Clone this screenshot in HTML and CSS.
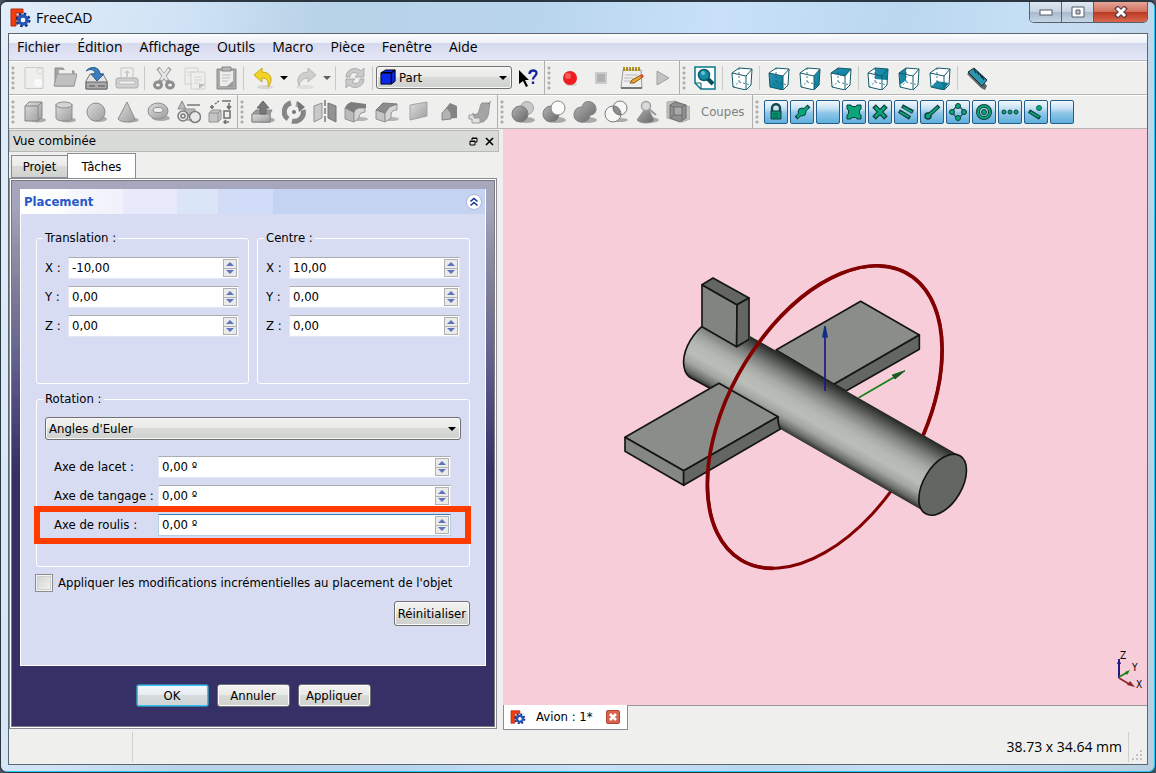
FILE: index.html
```html
<!DOCTYPE html>
<html lang="fr">
<head>
<meta charset="utf-8">
<title>FreeCAD</title>
<link rel="stylesheet" href="styles.css">
</head>
<body>
<svg class="defs" width="0" height="0" aria-hidden="true">
  <defs>
    <linearGradient id="metal" x1="0" y1="0" x2="1" y2="1"><stop offset="0" stop-color="#dcdddc"/><stop offset="1" stop-color="#9c9d9c"/></linearGradient>
    <linearGradient id="steel" x1="0" y1="0" x2="1" y2="1"><stop offset="0" stop-color="#b4b5b4"/><stop offset="1" stop-color="#646564"/></linearGradient>
    <linearGradient id="teal" x1="0" y1="0" x2="1" y2="1"><stop offset="0" stop-color="#2f8fb4"/><stop offset="1" stop-color="#00819a"/></linearGradient>
    <symbol id="logo" viewBox="0 0 21 19">
      <path d="M1 1h12v4H6v3h5v4H6v6H1z" fill="#f43c0c" stroke="#b42a10"/>
      <g fill="none" stroke="#14307c"><circle cx="13" cy="12" r="6" stroke-width="3" stroke-dasharray="2.4 2.3"/><circle cx="13" cy="12" r="4" stroke="#2458b4" stroke-width="3.4"/></g>
      <circle cx="13" cy="12" r="2.2" fill="#f4f8ff"/>
    </symbol>
    <symbol id="new" viewBox="0 0 24 24"><path d="M3 1.500h18v21H3z" fill="#efefee" stroke="#cacbca"/><circle cx="18" cy="5" r="3" fill="none" stroke="#dadada"/><circle cx="16" cy="17" r="4" fill="#fafafa"/></symbol>
    <symbol id="open" viewBox="0 0 24 24"><path d="M2 20V2h8l2 3h9v15z" fill="#a3a4a3" stroke="#8e8f8e"/><path d="M6 4h13v5H6z" fill="#eee"/><path d="M1 20 4 8h20l-3 12z" fill="#bfc0bf" stroke="#979897"/></symbol>
    <symbol id="save" viewBox="0 0 24 24"><path d="m2 15 4-7h13l4 7v8H2z" fill="#e1e2e1" stroke="#777"/><path d="M2 16h21v7H2z" fill="#aaabaa" stroke="#666"/><path d="M5 20h6m3 0h7" stroke="#555"/><path d="M2 5c5-6 14-4 14 3h4l-7 7-6-7h4C11 4 7 2 2 5z" fill="#3f7ebc" stroke="#285c94"/></symbol>
    <symbol id="print" viewBox="0 0 24 24"><path d="M6 2h12v12H6z" fill="#efefee" stroke="#c5c6c5"/><path d="M11 11V7H9l3-3 3 3h-2v4" fill="#c8c9c8"/><rect x="1" y="12" width="22" height="10" rx="2" fill="#d0d1d0" stroke="#aaa"/><path d="M4 15h16v3H4z" fill="#f4f4f4" stroke="#bbb"/></symbol>
    <symbol id="cut" viewBox="0 0 24 24"><path d="m6 2 11 15M18 2 7 17" stroke="#9a9b9a" stroke-width="4"/><path d="m7 3 8 11M17 3 9 14" stroke="#e8e9e8" stroke-width="2.400"/><g fill="none" stroke="#8d8e8d" stroke-width="3"><ellipse cx="6" cy="19" rx="3.500" ry="3"/><ellipse cx="18" cy="19" rx="3.500" ry="3"/></g></symbol>
    <symbol id="copy" viewBox="0 0 24 24"><g fill="#efefee" stroke="#cfd0cf"><path d="M2 2h13v16H2z"/><path d="M8 6h14v17H8z"/></g><path d="M4 6h9M4 9h4m3 2h8m-8 3h8m-8 3h6" stroke="#d2d3d2"/><path d="M16 23v-5h6z" fill="#bbb"/></symbol>
    <symbol id="paste" viewBox="0 0 24 24"><path d="M3 3h19v20H3z" fill="#aaa" stroke="#888"/><path d="M6 5h13v15H6z" fill="#ececeb"/><path d="M8 1h9v4H8z" fill="#b8b9b8" stroke="#858685"/><path d="M8 9h9M8 12h8m-8 3h6" stroke="#bfbfbf"/><path d="M19 15v6h-7z" fill="#999"/></symbol>
    <symbol id="undo" viewBox="0 0 24 24"><ellipse cx="14" cy="21" rx="8" ry="2" fill="#d6d6d3"/><path d="m3 9 8-7v4c9 0 12 8 6 15 1-6-1-9-6-9v4z" fill="#f2d326" stroke="#c9a91c"/></symbol>
    <symbol id="redo" viewBox="0 0 24 24"><ellipse cx="11" cy="21" rx="9" ry="2" fill="#dedfdd"/><path d="m22 9-8-7v4C5 6 2 13 5 20c1-5 4-8 9-8v4z" fill="#ced0ce" stroke="#b6b7b6"/></symbol>
    <symbol id="refresh" viewBox="0 0 24 24"><g fill="#c9cac9" stroke="#a9aaa9"><path d="M3 11C3 3 13 0 18 5l3-3v9h-9l3-3c-4-3-8-1-8 3z"/><path d="M21 13c0 8-10 11-15 6l-3 3v-9h9l-3 3c4 3 8 1 8-3z"/></g></symbol>
    <symbol id="bluecube" viewBox="0 0 18 18"><path d="m1 4 5-3h10v12l-4 3H1z" fill="#0a28ec" stroke="#000"/><path d="M1 4h11v12M12 4l4-3" fill="none" stroke="#000" stroke-width="1.500"/></symbol>
    <symbol id="whatsthis" viewBox="0 0 24 24"><path d="M3 4v14l4-3 3 6 2-1-3-6h4z" fill="#000"/><path d="M13.500 8c0-4.500 7-4.500 7-1s-3.500 3-3.500 6.500m0 2v2.500" fill="none" stroke="#1424a0" stroke-width="2.300"/></symbol>
    <symbol id="record" viewBox="0 0 24 24"><ellipse cx="13" cy="18" rx="6" ry="2" fill="#d0d0cd"/><circle cx="12" cy="12" r="7" fill="#ee1c1c"/><circle cx="10" cy="10" r="3" fill="#f65c5c"/></symbol>
    <symbol id="stop" viewBox="0 0 24 24"><path d="M7 7h10v10H7z" fill="#b0b1b0" stroke="#ccc" stroke-width="2"/></symbol>
    <symbol id="macroedit" viewBox="0 0 24 24"><path d="M3 4h18l1 18H1z" fill="#edeeed" stroke="#999"/><path d="M1 22h21" stroke="#777" stroke-width="2"/><path d="M3 3h18" stroke="#ac9020" stroke-width="4" stroke-dasharray="2 1"/><path d="M5 9h13M4 12h9m-9 3h7" stroke="#b7b8b7"/><path d="m10 17 2-3 9-5 2 2-9 6z" fill="#eea32c" stroke="#86591a"/><path d="m20 10 2-2 2 2-2 2z" fill="#d84432"/></symbol>
    <symbol id="play" viewBox="0 0 24 24"><path d="m6 5 12 7-12 7z" fill="#c1c2c1" stroke="#a0a1a0"/></symbol>
    <symbol id="fit" viewBox="0 0 24 24"><path d="M2 1h20v22H8l-6-6z" fill="#fff" stroke="#08788c" stroke-width="1.500"/><path d="M2 17h6v6" fill="none" stroke="#075c70"/><path d="m14 12 6 6" stroke="#07505e" stroke-width="4"/><circle cx="11" cy="9" r="5.500" fill="#168ba5" stroke="#075c70" stroke-width="1.500"/><circle cx="10" cy="7" r="2" fill="#70bdd0"/></symbol>
    <symbol id="wire" viewBox="0 0 24 24"><g fill="none" stroke="#135a69" stroke-linejoin="round"><path d="m2 7 7-5 13 1-6 7-14-3 1 14 13 3V10m0 14 5-5 1-16"/><path d="m3 21 6-5 12 3M9 16V2" stroke-width=".8" stroke-dasharray="2 2"/></g></symbol>
    <symbol id="v-iso" viewBox="0 0 24 24"><path d="m2 7 7-5 13 1-1 16-5 5-13-3z" fill="#fff"/><use href="#wire"/></symbol>
    <symbol id="v-front" viewBox="0 0 24 24"><path d="m2 7 7-5 13 1-1 16-5 5-13-3z" fill="#fff"/><path d="m2 7 14 3v14L3 21z" fill="url(#teal)"/><use href="#wire"/></symbol>
    <symbol id="v-right" viewBox="0 0 24 24"><path d="m2 7 7-5 13 1-1 16-5 5-13-3z" fill="#fff"/><path d="m16 10 6-7-1 16-5 5z" fill="url(#teal)"/><use href="#wire"/></symbol>
    <symbol id="v-top" viewBox="0 0 24 24"><path d="m2 7 7-5 13 1-1 16-5 5-13-3z" fill="#fff"/><path d="m2 7 7-5 13 1-6 7z" fill="url(#teal)"/><use href="#wire"/></symbol>
    <symbol id="v-rear" viewBox="0 0 24 24"><path d="m2 7 7-5 13 1-1 16-5 5-13-3z" fill="#fff"/><path d="m9 2 13 1-1 11-12-1z" fill="url(#teal)"/><use href="#wire"/></symbol>
    <symbol id="v-left" viewBox="0 0 24 24"><path d="m2 7 7-5 13 1-1 16-5 5-13-3z" fill="#fff"/><path d="m2 7 7-5v12l-6 5z" fill="url(#teal)"/><use href="#wire"/></symbol>
    <symbol id="v-bottom" viewBox="0 0 24 24"><path d="m2 7 7-5 13 1-1 16-5 5-13-3z" fill="#fff"/><path d="m3 21 6-6 12 2-5 7z" fill="url(#teal)"/><use href="#wire"/></symbol>
    <symbol id="ruler" viewBox="0 0 24 24"><path d="m2 8 14 14 4 2 2-4L8 3z" fill="#5d6462"/><path d="m3 6 6-4 13 12-5 6z" fill="#2f94b0" stroke="#12313a"/><path d="m9 3 2 4m1-2 2 4m1-1 2 4m0-2 2 4" stroke="#102b33" stroke-width="1.200"/></symbol>
    <symbol id="box" viewBox="0 0 24 24"><ellipse cx="16" cy="20" rx="8" ry="2.500" fill="#aaa"/><path d="m3 6 4-4h13v15l-4 4H3z" fill="url(#metal)" stroke="#858685"/><path d="M3 6h13v15m0-15 4-4" fill="none" stroke="#858685"/></symbol>
    <symbol id="cyl" viewBox="0 0 24 24"><ellipse cx="15" cy="20" rx="8" ry="2.500" fill="#aaa"/><path d="M3 4v14c0 4 16 4 16 0V4" fill="url(#metal)" stroke="#8d8e8d"/><ellipse cx="11" cy="5" rx="8" ry="3" fill="#d3d4d3" stroke="#8d8e8d"/></symbol>
    <symbol id="sphere" viewBox="0 0 24 24"><ellipse cx="15" cy="19" rx="8" ry="3" fill="#aaa"/><circle cx="12" cy="12" r="9" fill="url(#metal)" stroke="#8d8e8d"/></symbol>
    <symbol id="cone" viewBox="0 0 24 24"><ellipse cx="15" cy="20" rx="9" ry="2.500" fill="#aaa"/><path d="m12 2 8 17c-2 4-14 4-17 0z" fill="url(#metal)" stroke="#8d8e8d"/></symbol>
    <symbol id="torus" viewBox="0 0 24 24"><ellipse cx="15" cy="18" rx="9" ry="3" fill="#aaa"/><ellipse cx="12" cy="11" rx="10" ry="8" fill="url(#metal)" stroke="#8d8e8d"/><ellipse cx="12" cy="10" rx="5" ry="2.500" fill="#f0f0ef" stroke="#8d8e8d"/></symbol>
    <symbol id="prims" viewBox="0 0 24 24"><path d="m5 1 4 8H1z" fill="#bbb" stroke="#888"/><path d="M10 5h13" stroke="#777" stroke-width="1.500"/><path d="M7 9h11v6H7z" fill="#b7b8b7" stroke="#909190"/><g fill="#e8e9e8" stroke="#7d7e7d" stroke-width="1.500"><circle cx="6" cy="16" r="5"/><circle cx="6" cy="16" r="2"/><circle cx="18" cy="17" r="5.500"/></g><path d="M10 20h5" stroke="#777"/></symbol>
    <symbol id="shapes" viewBox="0 0 24 24"><path d="m1 13 3-3h9v9l-3 3H1z" fill="#c4c5c4" stroke="#929392"/><path d="M1 13h9v9m0-9 3-3" fill="none" stroke="#929392"/><g fill="none" stroke="#6f706f" stroke-width="1.500"><path d="M2 7h4M4 5v4M14 1h9m-2 2v5m-2-2 2 3 2-3M16 11h6v7h-6zM21 22h-5m2-2-2 2 2 2"/><path d="m7 4 4-3" stroke-dasharray="2 1"/></g></symbol>
    <symbol id="extrude" viewBox="0 0 24 24"><ellipse cx="15" cy="20" rx="9" ry="3" fill="#aaa"/><path d="m1 14 4-4h16l-2 4v8H1z" fill="#9a9b9a" stroke="#888"/><path d="M1 14h18v8H1z" fill="url(#metal)" stroke="#888"/><path d="M9 14V8H6l6-7 6 7h-3v6z" fill="#777877" stroke="#666"/></symbol>
    <symbol id="revolve" viewBox="0 0 24 24"><g fill="none" stroke="#848584" stroke-width="5"><path d="M9 3a9 9 0 0 0-3 16"/><path d="M10 21a9 9 0 0 0 11-11"/><path d="M14 4a9 9 0 0 1 5 3" stroke="#a6a7a6"/></g><path d="m15 1 8 6-6 5z" fill="#747574"/><circle cx="12" cy="12" r="2" fill="#777"/></symbol>
    <symbol id="mirror" viewBox="0 0 24 24"><path d="m1 6 8-3v15l-8 4z" fill="#c8c9c8" stroke="#929392"/><path d="m15 3 8 3v16l-8-4z" fill="#929392" stroke="#757675"/><path d="M12 0v24" stroke="#777" stroke-width="1.500" stroke-dasharray="6 2"/></symbol>
    <symbol id="fillet" viewBox="0 0 24 24"><ellipse cx="16" cy="19" rx="8" ry="2" fill="#b4b5b4"/><path d="M1 8v11l9 3V11z" fill="#b9bab9" stroke="#929392"/><path d="M10 22V12q1-3 5-4h6v4q-5 0-6 4v2z" fill="#d4d5d4" stroke="#929392"/><path d="M1 8q1-4 6-6l15 2v4h-6q-5 0-6 5z" fill="#7b7c7b"/></symbol>
    <symbol id="chamfer" viewBox="0 0 24 24"><ellipse cx="16" cy="19" rx="8" ry="2" fill="#b4b5b4"/><path d="M1 10v9l9 3V12z" fill="#c4c5c4" stroke="#929392"/><path d="M10 22V12l5-6 7-2v6q-6 0-6 5v3z" fill="#d4d5d4" stroke="#929392"/><path d="m1 10 7-7 14 1-8 3-4 6z" fill="#8b8c8b" stroke="#7b7c7b"/></symbol>
    <symbol id="face" viewBox="0 0 24 24"><path d="m4 5 17-3v14L4 20z" fill="url(#metal)" stroke="#a2a3a2"/></symbol>
    <symbol id="ruled" viewBox="0 0 24 24"><path d="m5 13 8-10 7 3v12L5 19z" fill="#838483"/><path d="m5 13 5-5 4 5v6l-9 1z" fill="#b2b3b2" stroke="#858685"/></symbol>
    <symbol id="loft" viewBox="0 0 24 24"><path d="m5 13 2 2c6-2 4-10 7-12h8c-2 8 0 15-7 19H5z" fill="#a3a4a3" stroke="#909190"/><path d="M1 15h5v3h6v5H4v-4H1z" fill="#e0e1e0" stroke="#999"/><path d="m20 4 3-3" stroke="#838483" fill="none"/></symbol>
    <symbol id="bool" viewBox="0 0 24 24"><ellipse cx="15" cy="20" rx="9" ry="3" fill="#aaa"/><circle cx="16" cy="8" r="6.500" fill="#c8c9c8" stroke="#a2a3a2"/><circle cx="9" cy="14" r="8" fill="url(#steel)" stroke="#7d7e7d"/></symbol>
    <symbol id="difference" viewBox="0 0 24 24"><ellipse cx="15" cy="20" rx="9" ry="3" fill="#aaa"/><circle cx="9" cy="14" r="8" fill="url(#steel)" stroke="#7d7e7d"/><circle cx="16" cy="8" r="7" fill="#fbfbfa" stroke="#858685"/></symbol>
    <symbol id="union" viewBox="0 0 24 24"><ellipse cx="15" cy="20" rx="9" ry="3" fill="#aaa"/><path d="M9 7c2-9 14-6 14 2 0 4-3 6-6 6-1 10-16 9-16 0 0-5 3-8 8-8z" fill="url(#steel)" stroke="#7d7e7d"/></symbol>
    <symbol id="common" viewBox="0 0 24 24"><ellipse cx="15" cy="20" rx="9" ry="2" fill="#aaa"/><g fill="#f7f7f6" stroke="#7d7e7d"><circle cx="9" cy="14" r="8"/><circle cx="16" cy="8" r="7"/></g><path d="M9.500 6c4 0 7 3 7.500 8.500-5 0-8-4-7.500-8.500z" fill="#8f908f" stroke="#6d6e6d"/></symbol>
    <symbol id="check" viewBox="0 0 24 24"><ellipse cx="15" cy="20" rx="9" ry="3" fill="#aaa"/><path d="m12 6 7 14c-2 4-14 4-17 0z" fill="url(#steel)" stroke="#909190"/><path d="m14 9 7 6" stroke="#999" stroke-width="2"/><circle cx="11" cy="6" r="4.500" fill="#d9dad9" stroke="#a0a1a0" stroke-width="1.500"/></symbol>
    <symbol id="section" viewBox="0 0 24 24"><path d="m1 2 8-1 15 6v12l-8 3-15-4z" fill="#c0c1c0" stroke="#aaa"/><path d="m4 5 5-3 11 3v13l-6 4-10-4z" fill="#8f908f" stroke="#6d6e6d"/><path d="M8 7h8v8H8zM4 18l4-3m8 0v6M4 5l4 2m8 0 4-2" fill="#a9aaa9" stroke="#6d6e6d"/></symbol>
    <symbol id="s-lock" viewBox="0 0 22 22"><path d="M7 11V7c0-5 8-5 8 0v4" fill="none" stroke="#164b49" stroke-width="2.400"/><path d="M6 10h10v8H6z" fill="#07906b" stroke="#103f3c"/><path d="M8 13h5m-5 3h5" stroke="#0b5e54"/></symbol>
    <symbol id="s-mid" viewBox="0 0 22 22"><path d="m5 17 13-12" stroke="#103f3c" stroke-width="4"/><circle cx="11" cy="11" r="4" fill="#08a678" stroke="#103f3c"/><path d="m6 16 11-10" stroke="#08a678" stroke-width="2.500"/></symbol>
    <symbol id="s-grid" viewBox="0 0 22 22"><path d="M4 4h4l1 1.500h4L14 4h4v4l-1.500 1v4l1.500 1v4h-4l-1-1.500H9L8 18H4v-4l1.500-1V9L4 8z" fill="#08a678" stroke="#103f3c"/></symbol>
    <symbol id="s-int" viewBox="0 0 22 22"><path d="m5 5 12 12M17 5 5 17" stroke="#103f3c" stroke-width="5"/><path d="m6 6 10 10M16 6 6 16" stroke="#08a678" stroke-width="2.500"/></symbol>
    <symbol id="s-par" viewBox="0 0 22 22"><g stroke="#103f3c" stroke-width="4"><path d="m7 5 11 6M4 10l11 7"/></g><g stroke="#08a678" stroke-width="2"><path d="m8 6 9 5M5 11l9 5"/></g></symbol>
    <symbol id="s-end" viewBox="0 0 22 22"><path d="M8 14 18 5" stroke="#103f3c" stroke-width="4"/><circle cx="7" cy="15" r="3" fill="#08a678" stroke="#103f3c" stroke-width="1.500"/><path d="m8 14 9-8" stroke="#08a678" stroke-width="2"/></symbol>
    <symbol id="s-ang" viewBox="0 0 22 22"><circle cx="11" cy="11" r="5" fill="none" stroke="#285b72" stroke-width="1.500"/><g fill="#08a678" stroke="#103f3c"><circle cx="11" cy="5" r="2.500"/><circle cx="17" cy="11" r="2.500"/><circle cx="11" cy="17" r="2.500"/><circle cx="5" cy="11" r="2.500"/></g></symbol>
    <symbol id="s-cen" viewBox="0 0 22 22"><circle cx="11" cy="11" r="6" fill="none" stroke="#103f3c" stroke-width="4"/><circle cx="11" cy="11" r="6" fill="none" stroke="#08a678" stroke-width="2"/><circle cx="11" cy="11" r="2.500" fill="#08a678" stroke="#103f3c"/></symbol>
    <symbol id="s-ext" viewBox="0 0 22 22"><g fill="#08a678" stroke="#103f3c"><circle cx="5" cy="11" r="2"/><circle cx="11" cy="11" r="2"/><circle cx="17" cy="11" r="2"/></g></symbol>
    <symbol id="s-near" viewBox="0 0 22 22"><path d="m4 10 11 7" stroke="#103f3c" stroke-width="4"/><path d="m5 11 9 5" stroke="#08a678" stroke-width="2"/><circle cx="14" cy="7" r="2.500" fill="#08a678" stroke="#0b6c58"/></symbol>
    <symbol id="arrow" viewBox="0 0 8 4"><path d="M0 0h8L4 4z"/></symbol>
  </defs>
</svg>

<div class="window">
  <header class="titlebar">
    <svg class="logo"><use href="#logo"/></svg>
    <h1 class="title">FreeCAD</h1>
    <div class="winbtns">
      <button class="winbtn" aria-label="Réduire"><svg width="14" height="8" viewBox="0 0 14 8"><rect x="1" y="2" width="12" height="5" fill="#fff" stroke="#525b68"/></svg></button>
      <button class="winbtn" aria-label="Agrandir"><svg width="14" height="12" viewBox="0 0 14 12"><path d="M1 1h12v10H1z" fill="#fff" stroke="#525b68"/><path d="M5 4h4v4H5z" fill="#b9c6d8" stroke="#525b68"/></svg></button>
      <button class="winbtn close" aria-label="Fermer"><svg width="14" height="12" viewBox="0 0 14 12"><path d="m2 1 10 10M12 1 2 11" stroke="#5d3c44" stroke-width="5"/><path d="m3 2 8 8m0-8-8 8" stroke="#fff" stroke-width="3"/></svg></button>
    </div>
  </header>

  <div class="frame">
    <nav class="menubar">
      <button>Fichier</button><button>Édition</button><button>Affichage</button><button>Outils</button><button>Macro</button><button>Pièce</button><button>Fenêtre</button><button>Aide</button>
    </nav>

    <div class="toolrow">
      <div class="toolbar">
        <i class="grip"></i>
        <button class="tool" aria-label="Nouveau"><svg><use href="#new"/></svg></button>
        <button class="tool" aria-label="Ouvrir"><svg><use href="#open"/></svg></button>
        <button class="tool" aria-label="Enregistrer"><svg><use href="#save"/></svg></button>
        <button class="tool" aria-label="Imprimer"><svg><use href="#print"/></svg></button>
        <i class="sep"></i>
        <button class="tool" aria-label="Couper"><svg><use href="#cut"/></svg></button>
        <button class="tool" aria-label="Copier"><svg><use href="#copy"/></svg></button>
        <button class="tool" aria-label="Coller"><svg><use href="#paste"/></svg></button>
        <i class="sep"></i>
        <button class="tool" aria-label="Annuler la commande"><svg><use href="#undo"/></svg></button>
        <button class="drop" aria-label="Liste annuler"><svg class="arrow"><use href="#arrow"/></svg></button>
        <button class="tool" aria-label="Rétablir"><svg><use href="#redo"/></svg></button>
        <button class="drop dim" aria-label="Liste rétablir"><svg class="arrow"><use href="#arrow"/></svg></button>
        <i class="sep"></i>
        <button class="tool" aria-label="Rafraîchir"><svg><use href="#refresh"/></svg></button>
        <i class="sep"></i>
        <div class="combo bench">
          <svg class="benchicon"><use href="#bluecube"/></svg>
          <select aria-label="Atelier"><option>Part</option></select>
          <svg class="arrow"><use href="#arrow"/></svg>
        </div>
        <button class="tool" aria-label="Qu'est-ce que c'est ?"><svg><use href="#whatsthis"/></svg></button>
      </div>
      <div class="toolbar">
        <i class="grip"></i>
        <button class="tool" aria-label="Enregistrer macro"><svg><use href="#record"/></svg></button>
        <button class="tool" aria-label="Arrêter"><svg><use href="#stop"/></svg></button>
        <button class="tool" aria-label="Macros"><svg><use href="#macroedit"/></svg></button>
        <button class="tool" aria-label="Exécuter"><svg><use href="#play"/></svg></button>
      </div>
      <div class="toolbar last">
        <i class="grip"></i>
        <button class="tool" aria-label="Tout afficher"><svg><use href="#fit"/></svg></button>
        <i class="sep"></i>
        <button class="tool" aria-label="Axonométrique"><svg><use href="#v-iso"/></svg></button>
        <i class="sep"></i>
        <button class="tool" aria-label="Face"><svg><use href="#v-front"/></svg></button>
        <button class="tool" aria-label="Droite"><svg><use href="#v-right"/></svg></button>
        <button class="tool" aria-label="Dessus"><svg><use href="#v-top"/></svg></button>
        <i class="sep"></i>
        <button class="tool" aria-label="Arrière"><svg><use href="#v-rear"/></svg></button>
        <button class="tool" aria-label="Gauche"><svg><use href="#v-left"/></svg></button>
        <button class="tool" aria-label="Dessous"><svg><use href="#v-bottom"/></svg></button>
        <i class="sep"></i>
        <button class="tool" aria-label="Mesurer"><svg><use href="#ruler"/></svg></button>
      </div>
    </div>

    <div class="toolrow part">
      <div class="toolbar">
        <i class="grip"></i>
        <button class="tool" aria-label="Cube"><svg><use href="#box"/></svg></button>
        <button class="tool" aria-label="Cylindre"><svg><use href="#cyl"/></svg></button>
        <button class="tool" aria-label="Sphère"><svg><use href="#sphere"/></svg></button>
        <button class="tool" aria-label="Cône"><svg><use href="#cone"/></svg></button>
        <button class="tool" aria-label="Tore"><svg><use href="#torus"/></svg></button>
        <button class="tool" aria-label="Primitives"><svg><use href="#prims"/></svg></button>
        <button class="tool" aria-label="Générateur"><svg><use href="#shapes"/></svg></button>
      </div>
      <div class="toolbar">
        <i class="grip"></i>
        <button class="tool" aria-label="Extrusion"><svg><use href="#extrude"/></svg></button>
        <button class="tool" aria-label="Révolution"><svg><use href="#revolve"/></svg></button>
        <button class="tool" aria-label="Miroir"><svg><use href="#mirror"/></svg></button>
        <button class="tool" aria-label="Congé"><svg><use href="#fillet"/></svg></button>
        <button class="tool" aria-label="Chanfrein"><svg><use href="#chamfer"/></svg></button>
        <button class="tool" aria-label="Surface"><svg><use href="#face"/></svg></button>
        <button class="tool" aria-label="Surface réglée"><svg><use href="#ruled"/></svg></button>
        <button class="tool" aria-label="Lissage"><svg><use href="#loft"/></svg></button>
      </div>
      <div class="toolbar">
        <i class="grip"></i>
        <button class="tool" aria-label="Opération booléenne"><svg><use href="#bool"/></svg></button>
        <button class="tool" aria-label="Soustraction"><svg><use href="#difference"/></svg></button>
        <button class="tool" aria-label="Union"><svg><use href="#union"/></svg></button>
        <button class="tool" aria-label="Intersection"><svg><use href="#common"/></svg></button>
        <button class="tool" aria-label="Vérifier"><svg><use href="#check"/></svg></button>
        <button class="tool" aria-label="Section"><svg><use href="#section"/></svg></button>
        <button class="textbtn">Coupes</button>
      </div>
      <div class="toolbar last snaps">
        <i class="grip"></i>
        <button class="snap" aria-label="Verrou"><svg><use href="#s-lock"/></svg></button>
        <button class="snap" aria-label="Milieu"><svg><use href="#s-mid"/></svg></button>
        <button class="snap" aria-label="Perpendiculaire"></button>
        <button class="snap" aria-label="Grille"><svg><use href="#s-grid"/></svg></button>
        <button class="snap" aria-label="Croisement"><svg><use href="#s-int"/></svg></button>
        <button class="snap" aria-label="Parallèle"><svg><use href="#s-par"/></svg></button>
        <button class="snap" aria-label="Extrémité"><svg><use href="#s-end"/></svg></button>
        <button class="snap" aria-label="Angle"><svg><use href="#s-ang"/></svg></button>
        <button class="snap" aria-label="Centre du cercle"><svg><use href="#s-cen"/></svg></button>
        <button class="snap" aria-label="Extension"><svg><use href="#s-ext"/></svg></button>
        <button class="snap" aria-label="Proche"><svg><use href="#s-near"/></svg></button>
        <button class="snap" aria-label="Ortho"></button>
      </div>
    </div>

    <main class="workspace">
      <section class="dock">
        <div class="docktitle">
          <h2>Vue combinée</h2>
          <button aria-label="Détacher"><svg width="9" height="9" viewBox="0 0 9 9"><path d="M3 3V1h5v4H6M1 4h5v4H1zM1 4.500h5M3 1.500h5" fill="none" stroke="#000"/></svg></button>
          <button aria-label="Fermer le panneau"><svg width="9" height="9" viewBox="0 0 9 9"><path d="m1 1 7 7m0-7L1 8" stroke="#000" stroke-width="1.600"/></svg></button>
        </div>
        <div class="tabs" role="tablist">
          <button class="tab" role="tab">Projet</button>
          <button class="tab active" role="tab" aria-selected="true">Tâches</button>
        </div>
        <div class="pane">
          <form class="tasks">
            <div class="box">
              <div class="boxhead">
                <h3>Placement</h3>
                <button type="button" class="fold" aria-label="Replier"><svg width="10" height="10" viewBox="0 0 10 10"><path d="m1.500 4.500 3.500-3 3.500 3m-7 4 3.500-3 3.500 3" fill="none" stroke="#12348c" stroke-width="1.600"/></svg></button>
              </div>
              <div class="boxbody">
                <div class="pair">
                  <fieldset class="vector">
                    <legend>Translation :</legend>
                    <div class="row"><label for="tx">X :</label><span class="spin"><input id="tx" type="text" value="-10,00"><span class="steps"><button type="button" aria-label="Plus"></button><button type="button" class="down" aria-label="Moins"></button></span></span></div>
                    <div class="row"><label for="ty">Y :</label><span class="spin"><input id="ty" type="text" value="0,00"><span class="steps"><button type="button" aria-label="Plus"></button><button type="button" class="down" aria-label="Moins"></button></span></span></div>
                    <div class="row"><label for="tz">Z :</label><span class="spin"><input id="tz" type="text" value="0,00"><span class="steps"><button type="button" aria-label="Plus"></button><button type="button" class="down" aria-label="Moins"></button></span></span></div>
                  </fieldset>
                  <fieldset class="vector">
                    <legend>Centre :</legend>
                    <div class="row"><label for="cx">X :</label><span class="spin"><input id="cx" type="text" value="10,00"><span class="steps"><button type="button" aria-label="Plus"></button><button type="button" class="down" aria-label="Moins"></button></span></span></div>
                    <div class="row"><label for="cy">Y :</label><span class="spin"><input id="cy" type="text" value="0,00"><span class="steps"><button type="button" aria-label="Plus"></button><button type="button" class="down" aria-label="Moins"></button></span></span></div>
                    <div class="row"><label for="cz">Z :</label><span class="spin"><input id="cz" type="text" value="0,00"><span class="steps"><button type="button" aria-label="Plus"></button><button type="button" class="down" aria-label="Moins"></button></span></span></div>
                  </fieldset>
                </div>
                <fieldset class="rotation">
                  <legend>Rotation :</legend>
                  <div class="combo">
                    <select aria-label="Mode de rotation"><option>Angles d'Euler</option></select>
                    <svg class="arrow"><use href="#arrow"/></svg>
                  </div>
                  <div class="angles">
                    <div class="row"><label for="yaw">Axe de lacet :</label><span class="spin"><input id="yaw" type="text" value="0,00 º"><span class="steps"><button type="button" aria-label="Plus"></button><button type="button" class="down" aria-label="Moins"></button></span></span></div>
                    <div class="row"><label for="pitch">Axe de tangage :</label><span class="spin"><input id="pitch" type="text" value="0,00 º"><span class="steps"><button type="button" aria-label="Plus"></button><button type="button" class="down" aria-label="Moins"></button></span></span></div>
                    <div class="row marked"><label for="roll">Axe de roulis :</label><span class="spin focus"><input id="roll" type="text" value="0,00 º"><span class="steps"><button type="button" aria-label="Plus"></button><button type="button" class="down" aria-label="Moins"></button></span></span></div>
                  </div>
                </fieldset>
                <label class="check"><input type="checkbox"><span>Appliquer les modifications incrémentielles au placement de l'objet</span></label>
                <div class="reset"><button type="button" class="btn">Réinitialiser</button></div>
              </div>
            </div>
            <div class="actions">
              <button type="button" class="btn default">OK</button>
              <button type="button" class="btn">Annuler</button>
              <button type="button" class="btn">Appliquer</button>
            </div>
          </form>
        </div>
      </section>

      <section class="document">
        <div class="view">
          <svg class="scene" viewBox="503 129 644 576" role="img" aria-label="Avion">
            <defs>
              <linearGradient id="hull" gradientUnits="userSpaceOnUse" x1="760" y1="435" x2="662" y2="607">
                <stop offset="0" stop-color="#242624"/><stop offset=".1" stop-color="#4b4d4b"/><stop offset=".25" stop-color="#80827f"/><stop offset=".4" stop-color="#a6a8a4"/><stop offset=".52" stop-color="#b6b8b4"/><stop offset=".66" stop-color="#bbbdb8"/><stop offset=".8" stop-color="#a3a5a1"/><stop offset=".92" stop-color="#6b6d6a"/><stop offset="1" stop-color="#2c2e2c"/>
              </linearGradient>
            </defs>
            <g transform="translate(600 250) scale(.33333)" stroke="#141614" stroke-width="5" stroke-linejoin="round">
              <ellipse cx="675" cy="501" rx="497" ry="288" transform="rotate(-60 675 501)" fill="none" stroke="#820000" stroke-width="9"/>
              <path d="M1026 295A497 288 -60 0 1 970 555" fill="none" stroke="#820000" stroke-width="11"/>
              <path d="m528 300 254-146 176 101-256 148z" fill="#8b8d8a"/>
              <path d="M958 255v43L738 423l-36-20z" fill="#646663"/>
              <path d="M305 230C270 262 245 310 252 350q4 25 20 33l693 397 105-168L450 258v10l-40 22z" fill="url(#hull)" stroke="none"/>
              <path d="M305 230C270 262 245 310 252 350q4 25 20 33l58 32" fill="none"/>
              <ellipse cx="1028" cy="704" rx="101" ry="57" transform="rotate(-59 1028 704)" fill="#646663"/>
              <path d="m75 562 282-162 177 100-283 162z" fill="#8b8d8a"/>
              <path d="M75 562v42l176 102v-44z" fill="#858784"/>
              <path d="m251 662 283-162q0 24 7 37L251 706z" fill="#646663"/>
              <path d="m306 104 105 60-1 126-104-60z" fill="#828481"/>
              <path d="m306 104 33-20 108 60-36 20z" fill="#646663"/>
              <path d="m411 164 36-20v124l-37 22z" fill="#646663"/>
              <path d="M1026 295A497 288 -60 1 0 520 955" fill="none" stroke="#820000" stroke-width="11"/>
              <path d="M675 423V250" stroke="#1a1a86"/><path d="m675 230-6 31h12z" fill="#102f85" stroke="#102f85"/>
              <path d="m776 443 106-61" stroke="#128312"/><path d="m915 362-38 13 8 12z" fill="#145c20" stroke="#145c20" stroke-width="3"/>
            </g>
          </svg>
          <svg class="axes" width="32" height="44" viewBox="0 0 32 44">
            <path d="M5 28V9" stroke="#1d1d80" stroke-width="2"/><path d="M3 14h4L5 9z" fill="#1d1d80"/>
            <path d="m5 27 9-5" stroke="#168016" stroke-width="1.500"/><path d="m11 22 5-2-3 5z" fill="#168016"/>
            <path d="m5 28 10 6" stroke="#8c2525" stroke-width="1.500"/><path d="m13 35 3-4 5 6z" fill="#8c2525"/>
            <text x="6" y="9">Z</text><text x="18" y="21">Y</text><text x="22" y="38">X</text>
          </svg>
        </div>
        <div class="doctabs">
          <div class="doctab"><svg class="doclogo"><use href="#logo"/></svg><span>Avion : 1*</span>
            <button aria-label="Fermer le document"><svg width="10" height="10" viewBox="0 0 10 10"><path d="m2 2 6 6m0-6L2 8" stroke="#fff" stroke-width="2.500"/></svg></button></div>
        </div>
      </section>
    </main>

    <footer class="statusbar">
      <div class="statusmsg"></div>
      <div class="dims">38.73 x 34.64 mm</div>
      <svg class="sizegrip" width="12" height="12" viewBox="0 0 12 12"><path d="M8 1h2v2H8zM4 5h2v2H4zm4 0h2v2H8zM0 9h2v2H0zm4 0h2v2H4zm4 0h2v2H8z" fill="#c4c5c3"/></svg>
    </footer>
  </div>
</div>
</body>
</html>
```
FILE: styles.css
```css
* { box-sizing: border-box; }
body {
  margin: 0;
  background: #4a545e;
  color: #000;
  font: 13px/16px "DejaVu Sans Condensed", "Noto Sans", sans-serif;
}
button, input, select { font: inherit; color: inherit; margin: 0; padding: 0; }
button { border: 0; background: none; }
h1, h2, h3 { margin: 0; font-size: inherit; font-weight: normal; }
.defs { position: absolute; }

.window {
  display: flex;
  flex-direction: column;
  min-height: 100vh;
  padding: 0 7px 7px;
  border: 1px solid #2b3640;
  border-top-width: 2px;
  border-radius: 7px;
  box-shadow: inset -1px -1px 0 #22c8f2;
  background: linear-gradient(100deg, #e1edf9 0, #cfe2f5 15%, #b8d2e7 25%, #b9d5ee 42%, #c8e1f8 56%, #bad7ef 70%, #c6dff4 80%, #b9cfe0 100%);
}
.titlebar { display: flex; align-items: flex-start; height: 31px; padding-left: 2px; }
.logo { width: 21px; height: 19px; margin-top: 6px; }
.title { flex: 1; margin: 6px 0 0 5px; font: 14px/20px "Open Sans", "Noto Sans", sans-serif; }
.winbtns {
  display: flex;
  height: 21px;
  border: 1px solid #53606e;
  border-top: 0;
  border-radius: 0 0 5px 5px;
  overflow: hidden;
}
.winbtn {
  display: flex;
  align-items: center;
  justify-content: center;
  width: 32px;
  border-right: 1px solid #53606e;
  background: linear-gradient(#dfe8f1, #c6d3e0 48%, #a9b9ca 50%, #c6d6e6);
}
.winbtn.close { width: 53px; border-right: 0; background: linear-gradient(#e6a596, #d1705e 48%, #b93722 50%, #d9694c); }

.frame {
  flex: 1;
  display: flex;
  flex-direction: column;
  border: 1px solid #5c6670;
  background: #eff0ee;
}
.menubar {
  display: flex;
  gap: 17px;
  height: 27px;
  padding-left: 8px;
  border-bottom: 1px solid #b2b4be;
  background: linear-gradient(#fbfcfd 0, #eef0f8 34%, #d6daee 36%, #dfe2f3 75%, #e4e6f6 100%);
  font: 14px/26px "Open Sans", "Noto Sans", sans-serif;
}
.toolrow { display: flex; height: 34px; border-bottom: 1px solid #b5b6b4; box-shadow: inset 0 1px 0 #fff; }
.toolbar {
  display: flex;
  align-items: center;
  padding: 0 1px;
  border-right: 1px solid #b0b1af;
}
.part .toolbar { padding-right: 2px; }
.toolbar.last { border-right: 0; }
.grip {
  width: 8px;
  height: 26px;
  background: radial-gradient(circle at 3px 3px, #adaeac 1px, transparent 2px) 0 0 / 8px 5px repeat-y;
}
.sep { width: 1px; height: 24px; margin: 0 3px 0 2px; background: #c9cac8; }
.tool { display: flex; justify-content: center; width: 31px; }
.tool svg { width: 24px; height: 24px; }
.drop { display: flex; justify-content: center; width: 12px; }
.drop.dim { opacity: .6; }
.arrow { width: 8px; height: 4px; }
.textbtn { padding: 0 6px 0 8px; color: #808180; }
.snaps { gap: 2px; }
.snap {
  display: flex;
  width: 24px;
  height: 24px;
  border: 1px solid #225e8d;
  border-radius: 2px;
  background: linear-gradient(#f3f9fd, #c4e0f4 35%, #8ec5e7 55%, #5fafdc);
}
.snap svg { width: 22px; height: 22px; }

.combo { position: relative; display: flex; }
.combo select {
  flex: 1;
  height: 23px;
  padding: 0 3px;
  appearance: none;
  border: 1px solid #6f706f;
  border-radius: 3px;
  box-shadow: inset 0 0 0 1px #f8f9f8;
  background: linear-gradient(#f2f3f1, #e9eae8 48%, #d9dbd8 50%, #cfd1ce);
}
.combo .arrow { position: absolute; right: 5px; top: 10px; }
.bench { width: 136px; }
.bench select { padding-left: 22px; }
.benchicon { position: absolute; left: 4px; top: 3px; width: 17px; height: 17px; }

.workspace { flex: 1; display: flex; }
.dock { flex: 0 0 490px; display: flex; flex-direction: column; padding-top: 1px; }
.docktitle {
  display: flex;
  align-items: center;
  gap: 7px;
  height: 22px;
  padding: 0 4px 0 3px;
  border: 1px solid #b8b9b7;
  background: #d9dbd8;
}
.docktitle h2 { flex: 1; }
.docktitle button { display: flex; }
.tabs { display: flex; align-items: flex-end; height: 26px; padding-left: 2px; }
.tab {
  height: 23px;
  width: 57px;
  border: 1px solid #898c95;
  background: linear-gradient(#f1f2f0, #ebecea 45%, #d9dad7 50%, #d2d3d0);
}
.tab.active { width: 69px; height: 26px; margin: 0 0 -1px -1px; border-bottom: 0; background: #fdfefd; }
.pane {
  flex: 1;
  display: flex;
  margin-right: 2px;
  padding: 1px;
  border: 1px solid #898c95;
  background: #fff;
}
.tasks {
  flex: 1;
  padding: 8px;
  border: 1px solid #77797f;
  background: linear-gradient(#a7a7be 0, #a3a3bb 5%, #8e8fa6 13%, #7a7895 22%, #696891 30%, #5b5887 36%, #484577 44%, #353166 53%, #353166 100%);
}
.box { border: 1px solid #fff; border-top: 0; background: #d7dcf2; }
.boxhead {
  display: flex;
  align-items: center;
  height: 25px;
  padding: 0 3px;
  background: linear-gradient(90deg, #fdfefe 0 40px, #f5f7fc 52px, #f1f1fb 102px, #e8eafc 102px 156px, #dbe5f8 156px 197px, #d3daf3 197px 204px, #d1dcf8 204px 252px, #c5d3f3 252px);
}
.boxhead h3 { flex: 1; color: #2858c8; font-weight: bold; }
.fold {
  display: flex;
  align-items: center;
  justify-content: center;
  width: 16px;
  height: 16px;
  border: 1px solid #b0b4d2;
  border-radius: 50%;
  background: #fff;
}
.boxbody { padding: 16px 15px 39px; }
.pair { display: flex; gap: 8px; }
fieldset {
  flex: 1;
  min-width: 0;
  margin: 0;
  padding: 10px 8px 0;
  border: 1px solid #fff;
  border-radius: 3px;
}
legend { height: 16px; margin-left: -2px; padding: 0 2px; }
.vector { height: 154px; padding-top: 11px; padding-right: 9px; }
.rotation { height: 176px; margin-top: 7px; }
.row { display: flex; align-items: center; height: 22px; margin-bottom: 7px; }
.row label { width: 23px; white-space: nowrap; }
.angles { padding: 16px 10px 0 9px; }
.angles .row label { width: 104px; }
.marked { position: relative; }
.marked::after {
  content: "";
  position: absolute;
  inset: -8px -20px;
  border: 6px solid #ff3c00;
  pointer-events: none;
}
.spin {
  flex: 1;
  display: flex;
  min-width: 0;
  height: 22px;
  padding: 1px;
  border: 1px solid #e4e7f2;
  border-top-color: #abadb3;
  background: #fefffe;
}
.spin.focus { border-color: #b5cfe7; border-top-color: #3d7bad; }
.spin input { flex: 1; min-width: 0; padding: 0 2px; border: 0; outline: 0; background: none; }
.steps { display: flex; flex-direction: column; width: 14px; border: 1px solid #b0b1b4; }
.steps button {
  flex: 1;
  display: flex;
  align-items: center;
  justify-content: center;
  border-bottom: 1px solid #b0b1b4;
  background: #ebecea;
}
.steps button::before {
  content: "";
  border: 4px solid transparent;
  border-top-width: 0;
  border-bottom-color: #5f74bc;
}
.steps .down { border-bottom: 0; }
.steps .down::before { border-width: 4px 4px 0; border-top-color: #5f74bc; }
.check { display: flex; align-items: center; gap: 5px; height: 18px; margin: 7px 0 9px -1px; white-space: nowrap; }
.check input {
  width: 18px;
  height: 18px;
  margin: 0;
  appearance: none;
  border: 1px solid #8c8d8c;
  box-shadow: inset 0 0 0 1px #f2f3f2, inset 0 0 0 2px #cfd1d0;
  background: linear-gradient(135deg, #cfd1d0, #f4f5f4);
}
.btn {
  min-width: 73px;
  height: 23px;
  padding: 0 3px;
  border: 1px solid #6f706f;
  border-radius: 3px;
  box-shadow: inset 0 0 0 1px #fafbfa;
  background: linear-gradient(#f2f3f1, #e9eae8 48%, #d9dbd8 50%, #cfd1ce);
}
.btn.default { border-color: #3a7fa8; box-shadow: inset 0 0 0 1px #35c3f1; background: linear-gradient(#f2f6fa, #e6edf2 48%, #d5dcdf 50%, #cfd3d3); }
.reset { display: flex; justify-content: flex-end; }
.reset .btn { height: 25px; }
.actions { display: flex; justify-content: center; gap: 8px; padding-top: 18px; }

.document { flex: 1; display: flex; flex-direction: column; min-width: 0; padding-left: 4px; }
.view { position: relative; flex: 1; min-height: 0; background: #f6cdd9; border-bottom: 1px solid #98989c; }
.scene { position: absolute; inset: 0; width: 100%; height: 100%; }
.axes { position: absolute; right: 1px; bottom: 11px; font: 10px "DejaVu Sans Condensed", sans-serif; }
.doctabs { display: flex; height: 23px; }
.doctab {
  display: flex;
  align-items: center;
  width: 125px;
  margin: -1px 0;
  padding: 0 7px 0 6px;
  border: 1px solid #898c95;
  border-top: 0;
  background: #fff;
  z-index: 1;
}
.doclogo { width: 16px; height: 14px; margin-right: 10px; }
.doctab span { flex: 1; white-space: nowrap; }
.doctab button {
  display: flex;
  align-items: center;
  justify-content: center;
  width: 14px;
  height: 14px;
  border: 1px solid #b04434;
  border-radius: 2px;
  background: #d8644e;
}
.statusbar { display: flex; align-items: center; height: 35px; }
.statusmsg { width: 124px; height: 30px; border-right: 1px solid #cfd0ce; }
.dims { flex: 1; padding-right: 6px; border-right: 1px solid #cfd0ce; text-align: right; font: 14px/30px "Open Sans", "Noto Sans", sans-serif; }
.sizegrip { align-self: flex-end; margin: 0 3px 3px; }
```
